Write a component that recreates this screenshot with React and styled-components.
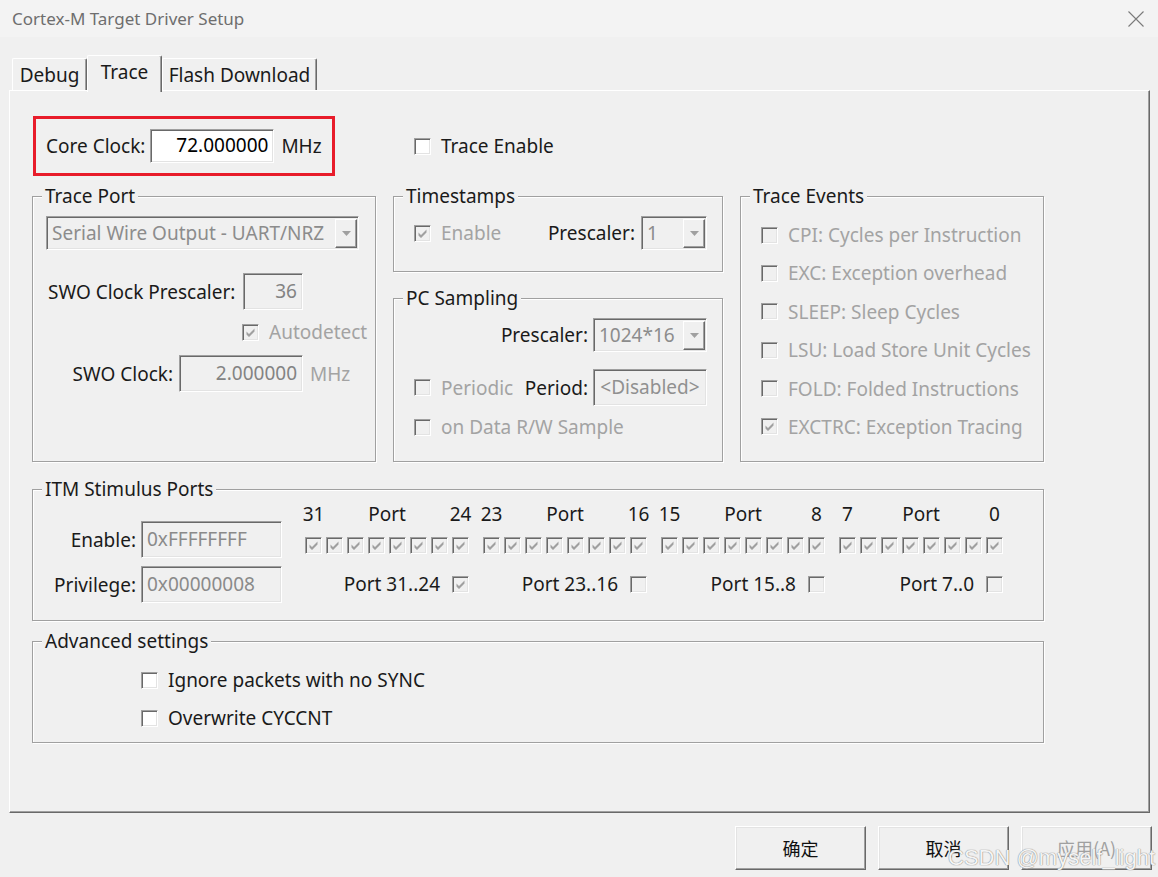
import React from "react";
import styled, { createGlobalStyle } from "styled-components";

const GlobalStyle = createGlobalStyle`
  html, body {
    margin: 0;
    padding: 0;
    background: #f0f0f0;
  }
  body {
    font-family: "Noto Sans", "Noto Sans CJK SC", sans-serif;
    font-size: 19px;
    line-height: 26px;
    color: #1a1a1a;
  }
`;

const Window = styled.div`
  position: relative;
  width: 1158px;
  height: 877px;
  background: #f0f0f0;
  overflow: hidden;
  display: flex;
  flex-direction: column;
`;

const TitleBar = styled.div`
  height: 37px;
  display: flex;
  align-items: center;
  justify-content: space-between;
  padding: 0 14px 0 12px;
  background: #f3f3f3;
  color: #6e6e6e;
  font-size: 17px;
`;

const TabStrip = styled.div`
  position: relative;
  z-index: 1;
  display: flex;
  align-items: flex-end;
  height: 35px;
  margin-top: 18px;
  padding-left: 12px;
`;

const Tab = styled.div`
  box-sizing: border-box;
  width: ${(p) => p.$w}px;
  height: ${(p) => (p.$active ? 37 : 32)}px;
  margin-bottom: ${(p) => (p.$active ? -2 : 0)}px;
  padding-bottom: ${(p) => (p.$active ? 5 : 0)}px;
  display: flex;
  align-items: center;
  justify-content: center;
  background: #f0f0f0;
  border-top: 1px solid #fff;
  border-left: 1px solid #fff;
  border-right: 1px solid #696969;
  box-shadow: inset -1px 0 #a0a0a0;
  border-radius: 2px 2px 0 0;
  color: #1a1a1a;
`;

const Panel = styled.div`
  box-sizing: border-box;
  width: 1141px;
  height: 723px;
  margin-left: 9px;
  padding: 25px 0 0 22px;
  border: 1px solid;
  border-color: #fff #696969 #696969 #fff;
  box-shadow: inset -1px -1px #a0a0a0;
  display: flex;
  flex-direction: column;
`;

const TopRow = styled.div`
  display: flex;
  align-items: center;
  gap: 79px;
`;

const Highlight = styled.div`
  box-sizing: border-box;
  width: 302px;
  height: 60px;
  margin-left: 1px;
  padding-left: 10px;
  border: 3px solid #e81c2a;
  display: flex;
  align-items: center;
  gap: 5px;
`;

const Unit = styled.span`
  margin-left: ${(p) => p.$ml || 0}px;
  color: ${(p) => (p.$disabled ? "#a3a3a3" : "#1a1a1a")};
`;

const GroupsRow = styled.div`
  display: flex;
  align-items: flex-start;
  gap: 17px;
  margin-top: 20px;
`;

const Column = styled.div`
  display: flex;
  flex-direction: column;
  gap: 26px;
`;

const Group = styled.div`
  box-sizing: border-box;
  width: ${(p) => p.$w}px;
  height: ${(p) => p.$h}px;
  margin-top: ${(p) => p.$mt || 0}px;
  border: 1px solid #a0a0a0;
  box-shadow: inset 1px 1px #fff, 1px 1px #fff;
  display: flex;
  flex-direction: column;
`;

const GroupTitle = styled.div`
  align-self: flex-start;
  height: 24px;
  line-height: 24px;
  margin: -13px 0 0 9px;
  padding: 0 3px;
  background: #f0f0f0;
  color: #1a1a1a;
`;

const Row = styled.div`
  display: flex;
  align-items: center;
  justify-content: ${(p) => p.$justify || "flex-start"};
  gap: ${(p) => p.$gap || 0}px;
  margin-top: ${(p) => p.$mt || 0}px;
  padding-left: ${(p) => p.$pl || 0}px;
  padding-right: ${(p) => p.$pr || 0}px;
  min-height: 26px;
`;

const Label = styled.span`
  box-sizing: border-box;
  width: ${(p) => (p.$w ? `${p.$w}px` : "auto")};
  text-align: ${(p) => p.$align || "left"};
  white-space: nowrap;
  color: #1a1a1a;
`;

const Sunken = styled.div`
  box-sizing: border-box;
  width: ${(p) => p.$w}px;
  height: ${(p) => p.$h || 37}px;
  border: 1px solid;
  border-color: #a0a0a0 #fff #fff #a0a0a0;
  box-shadow: inset 1px 1px #696969, inset -1px -1px #e3e3e3;
  background: ${(p) => (p.$enabled ? "#fff" : "#f0f0f0")};
  white-space: nowrap;
`;

const Field = styled(Sunken)`
  display: flex;
  align-items: center;
  justify-content: ${(p) =>
    p.$align === "left" ? "flex-start" : p.$align === "center" ? "center" : "flex-end"};
  padding: 0 5px 2px 5px;
  color: ${(p) => (p.$enabled ? "#000" : p.$tone || "#838383")};
`;

const ComboBox = styled(Sunken)`
  display: flex;
  align-items: stretch;
  padding: 2px 1px 1px 2px;
`;

const ComboText = styled.span`
  flex: 1;
  display: flex;
  align-items: center;
  padding: 0 0 2px 3px;
  color: #8c8c8c;
  overflow: hidden;
`;

const ComboArrow = styled.span`
  box-sizing: border-box;
  width: 22px;
  display: flex;
  align-items: center;
  justify-content: center;
  background: #f0f0f0;
  border: 1px solid;
  border-color: #fff #696969 #696969 #fff;
  box-shadow: inset -1px -1px #a0a0a0;
`;

const Combo = ({ w, h, children }) => (
  <ComboBox $w={w} $h={h}>
    <ComboText>{children}</ComboText>
    <ComboArrow>
      <svg width="9" height="5" viewBox="0 0 9 5">
        <path d="M0 0 H9 L4.5 5 Z" fill="#a0a0a0" />
      </svg>
    </ComboArrow>
  </ComboBox>
);

const Box = styled.span`
  box-sizing: border-box;
  flex: none;
  width: 17px;
  height: 17px;
  display: inline-flex;
  align-items: center;
  justify-content: center;
  border: 1px solid;
  border-color: #a0a0a0 #fff #fff #a0a0a0;
  box-shadow: inset 1px 1px #696969, inset -1px -1px #e3e3e3;
  background: ${(p) => (p.$disabled ? "#f0f0f0" : "#fff")};
`;

const Check = ({ checked, disabled }) => (
  <Box $disabled={disabled}>
    {checked && (
      <svg width="9" height="9" viewBox="0 0 9 9">
        <path d="M0.5 3.5 L3 6 L8.5 0.5 V3.5 L3 9 L0.5 6.5 Z" fill={disabled ? "#a0a0a0" : "#000"} />
      </svg>
    )}
  </Box>
);

const CheckLabel = styled.span`
  display: inline-flex;
  align-items: center;
  gap: 10px;
  white-space: nowrap;
  color: ${(p) => (p.$disabled ? "#a3a3a3" : "#1a1a1a")};
`;

const CheckItem = ({ checked, disabled, children }) => (
  <CheckLabel $disabled={disabled}>
    <Check checked={checked} disabled={disabled} />
    {children}
  </CheckLabel>
);

const EventList = styled.div`
  display: flex;
  flex-direction: column;
  gap: 12.4px;
  margin-top: 14px;
  padding-left: 20px;
`;

const ItmBody = styled.div`
  display: flex;
  align-items: flex-start;
`;

const ItmFields = styled.div`
  display: flex;
  flex-direction: column;
  gap: 8px;
  margin-top: 20px;
`;

const PortArea = styled.div`
  display: flex;
  flex-direction: column;
  margin: 1px 0 0 23px;
`;

const PortRow = styled.div`
  display: flex;
  gap: 14px;
  margin-top: ${(p) => p.$mt || 0}px;
`;

const HeaderCell = styled.div`
  width: 164px;
  height: 24px;
  line-height: 24px;
  display: grid;
  grid-template-columns: 17px 1fr 17px;
`;

const HeaderNum = styled.span`
  display: flex;
  justify-content: center;
  white-space: nowrap;
`;

const HeaderWord = styled.span`
  text-align: center;
`;

const CheckGroup = styled.div`
  width: 164px;
  display: flex;
  gap: 4px;
`;

const PortCell = styled.div`
  width: 164px;
  height: 26px;
  display: flex;
  align-items: center;
  justify-content: flex-end;
  gap: 12px;
  white-space: nowrap;
`;

const ButtonBar = styled.div`
  display: flex;
  justify-content: flex-end;
  gap: 12px;
  margin-top: 13px;
  padding-right: 6px;
`;

const Button = styled.button`
  box-sizing: border-box;
  width: 131px;
  height: 44px;
  padding: 0;
  background: #f0f0f0;
  border: 1px solid;
  border-color: #fff #696969 #696969 #fff;
  box-shadow: inset -1px -1px #a0a0a0, inset 1px 1px #e3e3e3;
  font-family: "Noto Sans CJK SC", "Noto Sans", sans-serif;
  font-size: 18px;
  color: ${(p) => (p.disabled ? "#a0a0a0" : "#111")};
`;

const Watermark = styled.div`
  position: absolute;
  right: 3px;
  bottom: 6px;
  font-family: "Liberation Sans", Arial, sans-serif;
  font-size: 22px;
  line-height: 26px;
  color: rgba(255, 255, 255, 0.92);
  text-shadow: 0 0 1px #8a8a8a, 0 0 1px #8a8a8a;
  pointer-events: none;
`;

const traceEvents = [
  ["CPI: Cycles per Instruction", false],
  ["EXC: Exception overhead", false],
  ["SLEEP: Sleep Cycles", false],
  ["LSU: Load Store Unit Cycles", false],
  ["FOLD: Folded Instructions", false],
  ["EXCTRC: Exception Tracing", true],
];

const portGroups = [
  { hi: "31", lo: "24", label: "Port 31..24", on: true },
  { hi: "23", lo: "16", label: "Port 23..16", on: false },
  { hi: "15", lo: "8", label: "Port 15..8", on: false },
  { hi: "7", lo: "0", label: "Port 7..0", on: false },
];

export default function App() {
  return (
    <Window>
      <GlobalStyle />
      <TitleBar>
        <span>Cortex-M Target Driver Setup</span>
        <svg width="16" height="16" viewBox="0 0 16 16">
          <path d="M0.5 0.5 L15.5 15.5 M15.5 0.5 L0.5 15.5" stroke="#7a7a7a" strokeWidth="1.1" />
        </svg>
      </TitleBar>

      <TabStrip>
        <Tab $w={75}>Debug</Tab>
        <Tab $w={75} $active>
          Trace
        </Tab>
        <Tab $w={155}>Flash Download</Tab>
      </TabStrip>

      <Panel>
        <TopRow>
          <Highlight>
            <span>Core Clock:</span>
            <Field $w={124} $h={34} $enabled>
              72.000000
            </Field>
            <Unit $ml={2}>MHz</Unit>
          </Highlight>
          <CheckItem>Trace Enable</CheckItem>
        </TopRow>

        <GroupsRow>
          <Group $w={344} $h={266}>
            <GroupTitle>Trace Port</GroupTitle>
            <Row $mt={8} $pl={13}>
              <Combo w={313} h={34}>
                Serial Wire Output - UART/NRZ
              </Combo>
            </Row>
            <Row $mt={23} $pl={15}>
              <Label $w={195}>SWO Clock Prescaler:</Label>
              <Field $w={60} $h={37}>
                36
              </Field>
            </Row>
            <Row $mt={9} $pl={209}>
              <CheckItem checked disabled>
                Autodetect
              </CheckItem>
            </Row>
            <Row $mt={10} $gap={6}>
              <Label $w={140} $align="right">
                SWO Clock:
              </Label>
              <Field $w={124} $h={37}>
                2.000000
              </Field>
              <Unit $ml={1} $disabled>
                MHz
              </Unit>
            </Row>
          </Group>

          <Column>
            <Group $w={330} $h={76}>
              <GroupTitle>Timestamps</GroupTitle>
              <Row $mt={8} $pl={20} $pr={15} $justify="space-between">
                <CheckItem checked disabled>
                  Enable
                </CheckItem>
                <Row $gap={6}>
                  <Label>Prescaler:</Label>
                  <Combo w={66} h={34}>
                    1
                  </Combo>
                </Row>
              </Row>
            </Group>
            <Group $w={330} $h={164}>
              <GroupTitle>PC Sampling</GroupTitle>
              <Row $mt={8} $pr={15} $justify="flex-end" $gap={5}>
                <Label>Prescaler:</Label>
                <Combo w={114} h={34}>
                  1024*16
                </Combo>
              </Row>
              <Row $mt={17} $pl={20} $pr={15} $justify="space-between">
                <CheckItem disabled>Periodic</CheckItem>
                <Row $gap={5}>
                  <Label>Period:</Label>
                  <Field $w={114} $h={37} $align="center" $tone="#909090">
                    &lt;Disabled&gt;
                  </Field>
                </Row>
              </Row>
              <Row $mt={8} $pl={20}>
                <CheckItem disabled>on Data R/W Sample</CheckItem>
              </Row>
            </Group>
          </Column>

          <Group $w={304} $h={266}>
            <GroupTitle>Trace Events</GroupTitle>
            <EventList>
              {traceEvents.map(([text, on]) => (
                <Row key={text}>
                  <CheckItem checked={on} disabled>
                    {text}
                  </CheckItem>
                </Row>
              ))}
            </EventList>
          </Group>
        </GroupsRow>

        <Group $w={1012} $h={132} $mt={27}>
          <GroupTitle>ITM Stimulus Ports</GroupTitle>
          <ItmBody>
            <ItmFields>
              <Row $gap={5}>
                <Label $w={103} $align="right">
                  Enable:
                </Label>
                <Field $w={141} $h={37} $align="left" $tone="#8a8a8a">
                  0xFFFFFFFF
                </Field>
              </Row>
              <Row $gap={5}>
                <Label $w={103} $align="right">
                  Privilege:
                </Label>
                <Field $w={141} $h={37} $align="left" $tone="#8a8a8a">
                  0x00000008
                </Field>
              </Row>
            </ItmFields>
            <PortArea>
              <PortRow>
                {portGroups.map((g) => (
                  <HeaderCell key={g.label}>
                    <HeaderNum>{g.hi}</HeaderNum>
                    <HeaderWord>Port</HeaderWord>
                    <HeaderNum>{g.lo}</HeaderNum>
                  </HeaderCell>
                ))}
              </PortRow>
              <PortRow $mt={11}>
                {portGroups.map((g) => (
                  <CheckGroup key={g.label}>
                    {Array.from({ length: 8 }, (_, i) => (
                      <Check key={i} checked disabled />
                    ))}
                  </CheckGroup>
                ))}
              </PortRow>
              <PortRow $mt={17}>
                {portGroups.map((g) => (
                  <PortCell key={g.label}>
                    {g.label}
                    <Check checked={g.on} disabled />
                  </PortCell>
                ))}
              </PortRow>
            </PortArea>
          </ItmBody>
        </Group>

        <Group $w={1012} $h={102} $mt={20}>
          <GroupTitle>Advanced settings</GroupTitle>
          <Row $mt={14} $pl={108}>
            <CheckItem>Ignore packets with no SYNC</CheckItem>
          </Row>
          <Row $mt={12} $pl={108}>
            <CheckItem>Overwrite CYCCNT</CheckItem>
          </Row>
        </Group>
      </Panel>

      <ButtonBar>
        <Button>确定</Button>
        <Button>取消</Button>
        <Button disabled>应用(A)</Button>
      </ButtonBar>

      <Watermark>CSDN @myself_light</Watermark>
    </Window>
  );
}
